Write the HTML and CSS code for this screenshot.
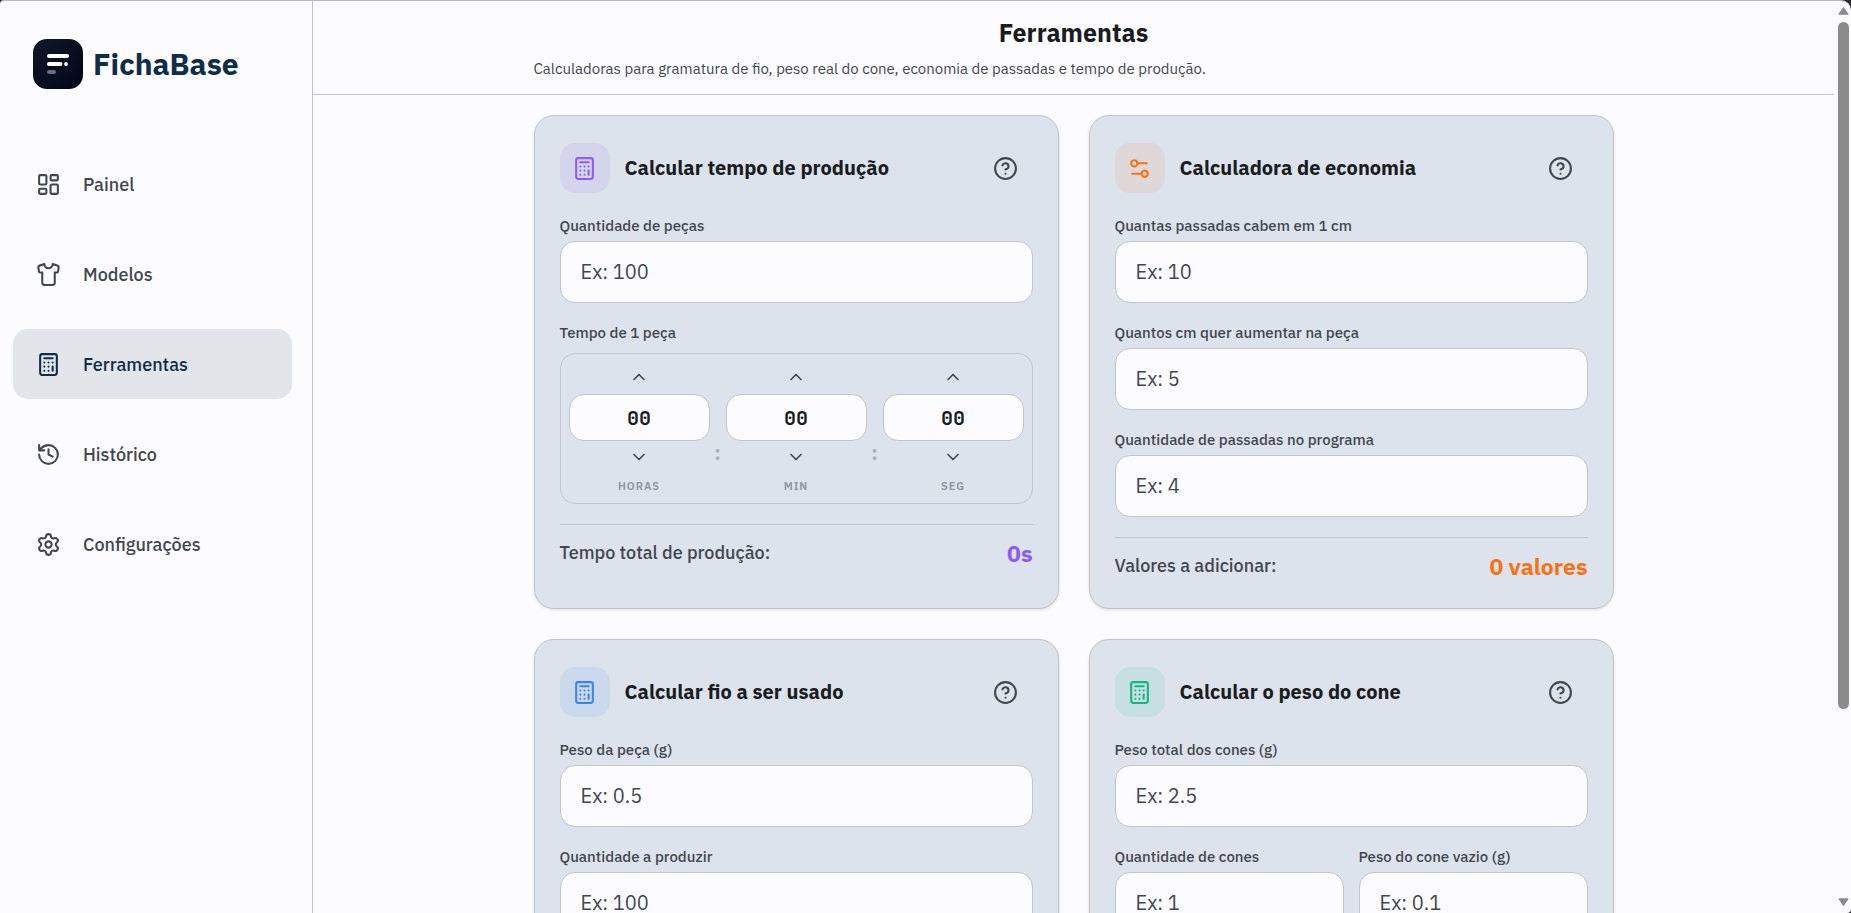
FILE: index.html
```html
<!DOCTYPE html>
<html lang="pt-BR">
<head>
<meta charset="utf-8">
<meta name="viewport" content="width=device-width, initial-scale=1">
<title>FichaBase - Ferramentas</title>
<link rel="stylesheet" href="styles.css">
</head>
<body>
<svg class="sprite" aria-hidden="true">
  <symbol id="calc" viewBox="0 0 24 24"><rect x="4" y="2" width="16" height="20" rx="2"/><path d="M8 6h8M16 14v4M16 10h.01M12 10h.01M8 10h.01M12 14h.01M8 14h.01M12 18h.01M8 18h.01"/></symbol>
  <symbol id="help" viewBox="0 0 24 24"><circle cx="12" cy="12" r="10"/><path d="M9.090 9a3 3 0 0 1 5.830 1c0 2-3 3-3 3M12 17h.01"/></symbol>
  <symbol id="up" viewBox="0 0 24 24"><path d="m18 15-6-6-6 6"/></symbol>
  <symbol id="down" viewBox="0 0 24 24"><path d="m6 9 6 6 6-6"/></symbol>
</svg>
<div class="app">
  <aside class="sidebar">
    <div class="brand">
      <svg class="logo" viewBox="0 0 50 50" aria-hidden="true">
        <defs><linearGradient id="lg" x1="0" y1="0" x2="1" y2="1"><stop offset="0" stop-color="#0f172a"/><stop offset="1" stop-color="#020617"/></linearGradient></defs>
        <rect width="50" height="50" rx="14" fill="url(#lg)"/>
        <rect x="14" y="15" width="22" height="4" rx="2" fill="#fff"/>
        <rect x="14" y="23" width="15.500" height="4" rx="2" fill="#fff"/>
        <circle cx="33" cy="25" r="1.900" fill="#fff"/>
        <rect x="14" y="31" width="9" height="4" rx="2" fill="#696e7a"/>
      </svg>
      <span class="brand-name">FichaBase</span>
    </div>
    <nav class="nav">
      <a class="nav-item" href="#painel"><svg class="icon" viewBox="0 0 24 24"><rect x="3" y="3" width="7" height="9" rx="1"/><rect x="14" y="3" width="7" height="5" rx="1"/><rect x="14" y="12" width="7" height="9" rx="1"/><rect x="3" y="16" width="7" height="5" rx="1"/></svg>Painel</a>
      <a class="nav-item" href="#modelos"><svg class="icon" viewBox="0 0 24 24"><path d="M20.380 3.460 16 2a4 4 0 0 1-8 0L3.620 3.460a2 2 0 0 0-1.340 2.230l.58 3.470a1 1 0 0 0 .99.84H6v10c0 1.100.9 2 2 2h8a2 2 0 0 0 2-2V10h2.150a1 1 0 0 0 .99-.84l.58-3.470a2 2 0 0 0-1.340-2.230z"/></svg>Modelos</a>
      <a class="nav-item active" href="#ferramentas" aria-current="page"><svg class="icon"><use href="#calc"/></svg>Ferramentas</a>
      <a class="nav-item" href="#historico"><svg class="icon" viewBox="0 0 24 24"><path d="M3 12a9 9 0 1 0 9-9 9.750 9.750 0 0 0-6.740 2.740L3 8M3 3v5h5M12 7v5l4 2"/></svg>Histórico</a>
      <a class="nav-item" href="#configuracoes"><svg class="icon" viewBox="0 0 24 24"><path d="M9.671 4.136a2.340 2.340 0 0 1 4.659 0 2.340 2.340 0 0 0 3.319 1.915 2.340 2.340 0 0 1 2.330 4.033 2.340 2.340 0 0 0 0 3.831 2.340 2.340 0 0 1-2.330 4.033 2.340 2.340 0 0 0-3.319 1.915 2.340 2.340 0 0 1-4.659 0 2.340 2.340 0 0 0-3.320-1.915 2.340 2.340 0 0 1-2.330-4.033 2.340 2.340 0 0 0 0-3.831A2.340 2.340 0 0 1 6.350 6.051a2.340 2.340 0 0 0 3.319-1.915"/><circle cx="12" cy="12" r="3"/></svg>Configurações</a>
    </nav>
  </aside>
  <main class="main">
    <header class="header">
      <div class="wrap">
        <h1 class="title">Ferramentas</h1>
        <p class="subtitle">Calculadoras para gramatura de fio, peso real do cone, economia de passadas e tempo de produção.</p>
      </div>
    </header>
    <div class="wrap cards">
      <section class="card">
        <div class="card-head"><span class="tile purple"><svg class="icon"><use href="#calc"/></svg></span><h2 class="card-title">Calcular tempo de produção</h2><button class="help" type="button" aria-label="Ajuda"><svg class="icon"><use href="#help"/></svg></button></div>
        <div class="fields">
          <div class="field"><label for="pecas">Quantidade de peças</label><input class="input" id="pecas" placeholder="Ex: 100"></div>
          <div class="field">
            <span class="label">Tempo de 1 peça</span>
            <div class="time">
              <div class="unit"><button class="step" type="button" aria-label="Aumentar horas"><svg class="icon chev"><use href="#up"/></svg></button><input class="digits" id="h" value="00"><button class="step" type="button" aria-label="Diminuir horas"><svg class="icon chev"><use href="#down"/></svg></button><label class="unit-label" for="h">HORAS</label></div>
              <span class="colon">:</span>
              <div class="unit"><button class="step" type="button" aria-label="Aumentar minutos"><svg class="icon chev"><use href="#up"/></svg></button><input class="digits" id="m" value="00"><button class="step" type="button" aria-label="Diminuir minutos"><svg class="icon chev"><use href="#down"/></svg></button><label class="unit-label" for="m">MIN</label></div>
              <span class="colon">:</span>
              <div class="unit"><button class="step" type="button" aria-label="Aumentar segundos"><svg class="icon chev"><use href="#up"/></svg></button><input class="digits" id="s" value="00"><button class="step" type="button" aria-label="Diminuir segundos"><svg class="icon chev"><use href="#down"/></svg></button><label class="unit-label" for="s">SEG</label></div>
            </div>
          </div>
        </div>
        <div class="result"><span>Tempo total de produção:</span><strong class="value purple-text">0s</strong></div>
      </section>
      <section class="card">
        <div class="card-head"><span class="tile orange"><svg class="icon" viewBox="0 0 24 24"><circle cx="7" cy="7" r="3"/><path d="M19 7h-9M14 17H5"/><circle cx="17" cy="17" r="3"/></svg></span><h2 class="card-title">Calculadora de economia</h2><button class="help" type="button" aria-label="Ajuda"><svg class="icon"><use href="#help"/></svg></button></div>
        <div class="fields">
          <div class="field"><label for="cabem">Quantas passadas cabem em 1 cm</label><input class="input" id="cabem" placeholder="Ex: 10"></div>
          <div class="field"><label for="aumentar">Quantos cm quer aumentar na peça</label><input class="input" id="aumentar" placeholder="Ex: 5"></div>
          <div class="field"><label for="programa">Quantidade de passadas no programa</label><input class="input" id="programa" placeholder="Ex: 4"></div>
        </div>
        <div class="result"><span>Valores a adicionar:</span><strong class="value orange-text">0 valores</strong></div>
      </section>
      <section class="card">
        <div class="card-head"><span class="tile blue"><svg class="icon"><use href="#calc"/></svg></span><h2 class="card-title">Calcular fio a ser usado</h2><button class="help" type="button" aria-label="Ajuda"><svg class="icon"><use href="#help"/></svg></button></div>
        <div class="fields">
          <div class="field"><label for="peso">Peso da peça (g)</label><input class="input" id="peso" placeholder="Ex: 0.5"></div>
          <div class="field"><label for="produzir">Quantidade a produzir</label><input class="input" id="produzir" placeholder="Ex: 100"></div>
        </div>
      </section>
      <section class="card">
        <div class="card-head"><span class="tile green"><svg class="icon"><use href="#calc"/></svg></span><h2 class="card-title">Calcular o peso do cone</h2><button class="help" type="button" aria-label="Ajuda"><svg class="icon"><use href="#help"/></svg></button></div>
        <div class="fields">
          <div class="field"><label for="total">Peso total dos cones (g)</label><input class="input" id="total" placeholder="Ex: 2.5"></div>
          <div class="pair">
            <div class="field"><label for="cones">Quantidade de cones</label><input class="input" id="cones" placeholder="Ex: 1"></div>
            <div class="field"><label for="vazio">Peso do cone vazio (g)</label><input class="input" id="vazio" placeholder="Ex: 0.1"></div>
          </div>
        </div>
      </section>
    </div>
  </main>
  <div class="scrollbar" aria-hidden="true">
    <svg class="arrow" viewBox="0 0 10 8"><path d="M5 1.500 8.500 6.500h-7z"/></svg>
    <div class="track"><div class="thumb"></div></div>
    <svg class="arrow" viewBox="0 0 10 8"><path d="M1.500 1.500h7L5 6.500z"/></svg>
  </div>
</div>
</body>
</html>
```
FILE: styles.css
```css
* { box-sizing: border-box; }
html { background: #2b2b2e; }
body {
  margin: 0;
  font-family: "IBM Plex Sans", Roboto, "Noto Sans", sans-serif;
  color: #42474e;
}
.sprite { position: absolute; width: 0; height: 0; }
.app {
  display: flex;
  height: 100vh;
  overflow: hidden;
  background: #fcfcff;
  border-top: 1px solid #b9b9bd;
  border-radius: 4px 10px 4px 0;
}
.icon {
  width: 25px;
  height: 25px;
  flex: none;
  fill: none;
  stroke: currentColor;
  stroke-width: 2;
  stroke-linecap: round;
  stroke-linejoin: round;
}

.sidebar {
  flex: none;
  width: 313px;
  border-right: 1px solid #c3c4c9;
}
.brand {
  display: flex;
  align-items: center;
  gap: 10px;
  padding: 38px 33px 0;
}
.logo { width: 50px; height: 50px; }
.brand-name { font-size: 30px; line-height: 50px; font-weight: 700; color: #0f2d48; }
.nav {
  display: flex;
  flex-direction: column;
  gap: 20px;
  padding: 60px 20px 0 13px;
}
.nav-item {
  display: flex;
  align-items: center;
  gap: 22px;
  height: 70px;
  padding: 0 23px;
  border-radius: 15px;
  font-size: 18px;
  font-weight: 500;
  color: #42474e;
  text-decoration: none;
}
.nav-item.active { background: #e2e6ea; color: #0f2d48; }

.main { flex: 1; min-width: 0; overflow: hidden; }
.wrap { max-width: 1080px; margin: 0 auto; }
.header { padding: 15px 20px; border-bottom: 1px solid #c3c4c9; }
.title {
  margin: 0;
  font-size: 25px;
  line-height: 34px;
  font-weight: 700;
  text-align: center;
  color: #1a1c1e;
}
.subtitle { margin: 9px 0 0; font-size: 15px; line-height: 20px; }

.cards {
  display: grid;
  grid-template-columns: 1fr 1fr;
  gap: 30px;
  padding-top: 20px;
}
.card {
  padding: 27px 25px 25px;
  border: 1px solid #c1c5cb;
  border-radius: 20px;
  background: #dce3ec;
  box-shadow: 0 1px 3px rgba(0, 0, 0, .12);
}
.card-head { display: flex; align-items: center; gap: 15px; }
.tile {
  display: grid;
  place-items: center;
  width: 50px;
  height: 50px;
  border-radius: 15px;
}
.purple { background: #d4d4ed; color: #8b5cf6; }
.orange { background: #dfd8d8; color: #f97316; }
.blue { background: #cbd9ed; color: #3b82f6; }
.green { background: #c7dfe3; color: #10b981; }
.card-title { flex: 1; margin: 0; font-size: 20px; line-height: 28px; font-weight: 700; color: #1a1c1e; }
.help {
  display: grid;
  place-items: center;
  width: 55px;
  height: 50px;
  padding: 0;
  border: 0;
  background: none;
  color: #42474e;
}
.fields { display: flex; flex-direction: column; gap: 19px; margin-top: 22px; }
.field { display: flex; flex-direction: column; gap: 4px; min-width: 0; }
.field > label, .label { font-size: 15px; line-height: 22px; font-weight: 500; }
.input {
  width: 100%;
  height: 62px;
  padding: 0 20px 2px;
  border: 1px solid #c1c5cb;
  border-radius: 15px;
  background: #fcfcff;
  font: inherit;
  font-size: 20px;
  color: #1a1c1e;
}
.input::placeholder { color: #42474e; opacity: 1; }
.pair { display: grid; grid-template-columns: 1fr 1fr; gap: 15px; }

.time {
  display: grid;
  grid-template-columns: 1fr 16px 1fr 16px 1fr;
  margin-top: 5px;
  padding: 7px 8px;
  border: 1px solid #c1c5cb;
  border-radius: 15px;
}
.unit { display: flex; flex-direction: column; align-items: center; min-width: 0; }
.step {
  display: grid;
  place-items: center;
  width: 100%;
  height: 33px;
  padding: 0 0 2px;
  border: 0;
  background: none;
  color: #42474e;
}
.chev { width: 20px; height: 20px; }
.digits {
  width: 100%;
  height: 47px;
  padding: 0;
  border: 1px solid #c1c5cb;
  border-radius: 15px;
  background: #fcfcff;
  font-family: "JetBrains Mono", "DejaVu Sans Mono", monospace;
  font-size: 20px;
  font-weight: 700;
  text-align: center;
  color: #1a1c1e;
}
.unit-label { padding-top: 2px; font-size: 11px; line-height: 20px; font-weight: 600; letter-spacing: 1px; color: #8f949b; }
.colon { align-self: center; padding-top: 48px; font-size: 20px; line-height: 24px; font-weight: 700; text-align: center; color: #a9aeb6; }
.result {
  display: flex;
  align-items: center;
  justify-content: space-between;
  margin-top: 20px;
  padding: 13px 0 2px;
  border-top: 1px solid #c1c5cb;
  font-size: 18px;
  line-height: 30px;
  font-weight: 500;
}
.value { font-size: 23px; line-height: 28px; font-weight: 700; }
.purple-text { color: #8b5cf6; }
.orange-text { color: #f97316; }

.scrollbar {
  display: flex;
  flex-direction: column;
  align-items: center;
  flex: none;
  width: 17px;
  padding: 5px 0 6px 2px;
}
.arrow { width: 13px; height: 10px; fill: #8b8b8b; stroke: #8b8b8b; stroke-linejoin: round; }
.track { flex: 1; width: 11px; padding: 6px 0; }
.thumb { height: 79%; border-radius: 6px; background: #8b8b8b; }
```
